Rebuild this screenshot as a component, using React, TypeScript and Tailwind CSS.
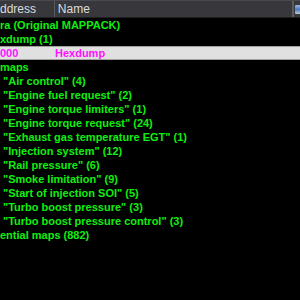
import React from "react";

const items = [
  '"Air control" (4)',
  '"Engine fuel request" (2)',
  '"Engine torque limiters" (1)',
  '"Engine torque request" (24)',
  '"Exhaust gas temperature EGT" (1)',
  '"Injection system" (12)',
  '"Rail pressure" (6)',
  '"Smoke limitation" (9)',
  '"Start of injection SOI" (5)',
  '"Turbo boost pressure" (3)',
  '"Turbo boost pressure control" (3)',
];

export default function App() {
  return (
    <div className="w-[300px] h-[300px] bg-black overflow-hidden font-['Liberation_Sans',Arial,sans-serif]">
      <div className="flex h-[18px] bg-[#38383c] border-t border-[#4a4a4e] border-b border-b-[#202022] text-[12px] text-[#dcdcdc] leading-[16px]">
        <div className="w-[54px] overflow-hidden whitespace-nowrap">ddress</div>
        <div className="w-px bg-[#5c5c60]" />
        <div className="w-[238px] pl-[3px]">Name</div>
        <div className="w-[2px] bg-[#5c5c60]" />
        <div className="flex-1 flex items-center pl-[1px]">
          <div className="w-[5px] h-[9px] bg-gradient-to-b from-[#9ab8e0] via-[#4a7cc0] to-[#c0c8d0] rounded-l-[1px]" />
        </div>
      </div>
      <div className="text-[11px] font-bold leading-[14px] text-[#10ee10] whitespace-nowrap">
        <div className="h-[14px]">ra (Original MAPPACK)</div>
        <div className="h-[14px]">xdump (1)</div>
        <div className="h-[14px] flex bg-[#e0e0e0] border-y border-[#a0a0a0] text-[#ff10ff] leading-[12px]">
          <div className="w-[54px]">000</div>
          <div className="pl-[1px]">Hexdump</div>
        </div>
        <div className="h-[14px]">maps</div>
        {items.map((t) => (
          <div key={t} className="h-[14px] pl-[3px]">
            {t}
          </div>
        ))}
        <div className="h-[14px]">ential maps (882)</div>
      </div>
    </div>
  );
}
